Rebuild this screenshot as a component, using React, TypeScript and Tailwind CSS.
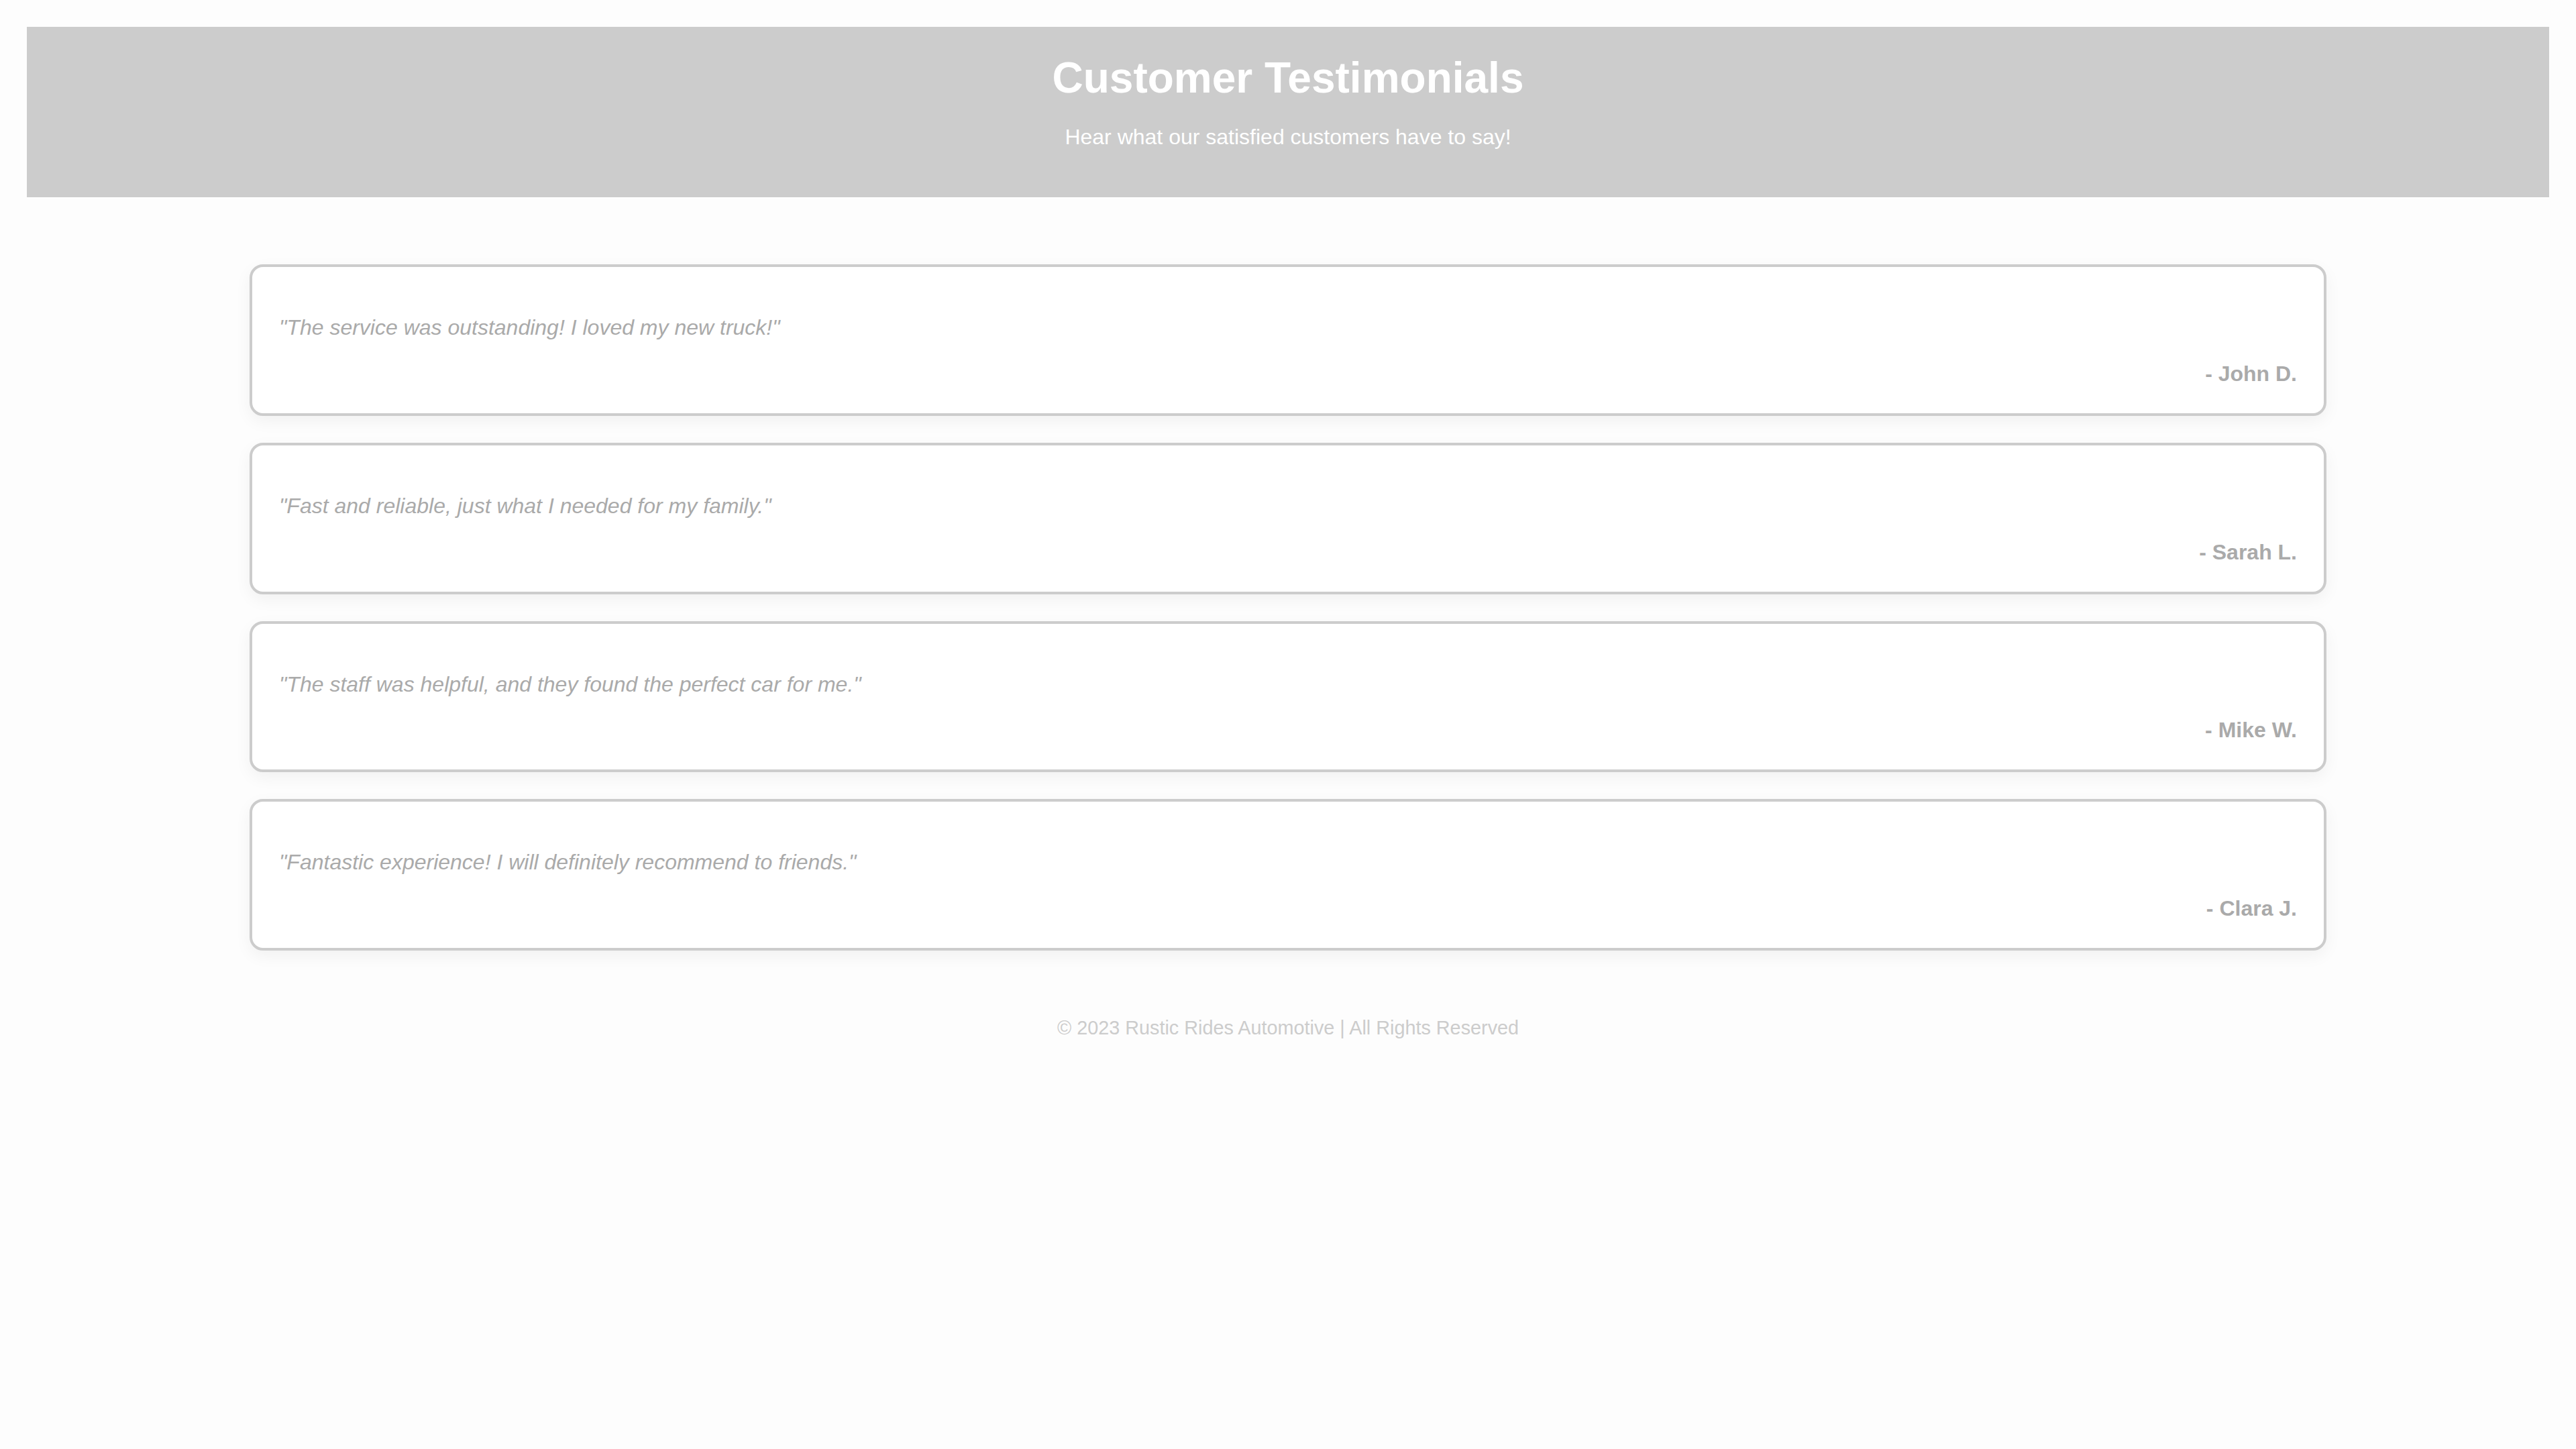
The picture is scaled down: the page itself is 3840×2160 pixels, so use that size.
const testimonials = [
  { quote: '"The service was outstanding! I loved my new truck!"', author: "- John D." },
  { quote: '"Fast and reliable, just what I needed for my family."', author: "- Sarah L." },
  { quote: '"The staff was helpful, and they found the perfect car for me."', author: "- Mike W." },
  { quote: '"Fantastic experience! I will definitely recommend to friends."', author: "- Clara J." },
];

export default function App() {
  return (
    <div className="min-h-screen bg-[#fdfdfd] p-[40px] font-['Liberation_Sans',Arial,sans-serif]">
      <header className="bg-[#cccccc] p-[40px] text-center text-white">
        <h1 className="m-0 text-[64px] font-bold leading-[73.6px]">Customer Testimonials</h1>
        <p className="my-[32px] text-[32px] leading-[36.8px]">Hear what our satisfied customers have to say!</p>
      </header>

      <main className="mx-auto mt-[100px] flex w-[3096px] flex-col gap-[40px]">
        {testimonials.map((t) => (
          <div
            key={t.author}
            className="rounded-[20px] border-[4px] border-[#cccccc] bg-white p-[40px] shadow-[0_8px_24px_rgba(0,0,0,0.05)]"
          >
            <p className="my-[32px] text-[32px] italic leading-[36.8px] text-[#aaaaaa]">{t.quote}</p>
            <p className="text-right text-[32px] font-bold leading-[36.8px] text-[#aaaaaa]">{t.author}</p>
          </div>
        ))}
      </main>

      <footer className="mt-[99px] text-center text-[28.8px] leading-[33px] text-[#cccccc]">
        © 2023 Rustic Rides Automotive | All Rights Reserved
      </footer>
    </div>
  );
}
